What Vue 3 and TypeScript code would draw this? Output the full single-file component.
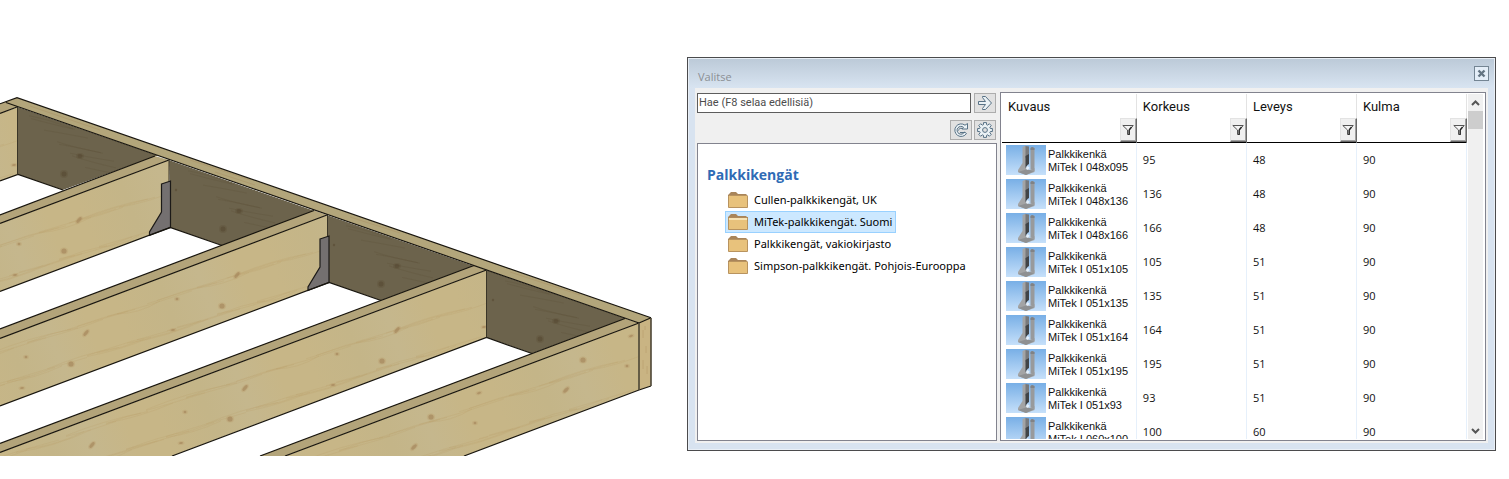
<script setup lang="ts">
import { ref } from 'vue'

interface Knot { x: number; y: number; rx: number; ry: number; a: number }
interface Beam { id: string; face: string; top: string; knots: Knot[]; x0: number; y0: number }

const cluster = (x: number, y: number): Knot[] => [
  { x, y, rx: 3.5, ry: 1.6, a: -50 },
  { x: x - 15, y: y + 31, rx: 2.6, ry: 2.6, a: 0 },
  { x: x - 60, y: y + 24, rx: 1.4, ry: 1.2, a: 0 },
  { x: x - 64, y: y + 55, rx: 2, ry: 1, a: -10 },
]

const flipped = (x: number, y: number): Knot[] => [
  { x, y, rx: 2.6, ry: 2.6, a: 0 },
  { x: x - 17, y: y + 30, rx: 3.5, ry: 1.6, a: -45 },
  { x: x + 48, y: y - 24, rx: 2, ry: 1, a: -15 },
  { x: x + 44, y: y + 6, rx: 1.4, ry: 1.2, a: 0 },
]

const beams: Beam[] = [
  { id: 'b0', face: '0,113.5 18,107 18,174.5 0,181', top: '0,103.8 17,97.7 17,107 0,113.5', x0: 18, y0: 107,
    knots: [{ x: 14, y: 165, rx: 2, ry: 1, a: -10 }] },
  { id: 'b1', face: '0,223.5 169,160 170,227.5 0,291.5', top: '0,215 155,156 169,160 0,223.5', x0: 169, y0: 160,
    knots: cluster(79, 220) },
  { id: 'b2', face: '0,338.5 327,215 329,282.5 0,406', top: '0,329 314,210.5 327,215 0,338.5', x0: 327, y0: 215,
    knots: [...cluster(237, 275), ...cluster(86, 333)] },
  { id: 'b3', face: '0,452.5 486.5,270 486.5,337.5 172,456 0,456', top: '0,443.5 474,265.5 486.5,270 0,452.5', x0: 486, y0: 270,
    knots: [...cluster(397, 330), ...cluster(245, 388), ...cluster(92, 445), { x: 484, y: 327, rx: 2, ry: 1, a: -10 }] },
  { id: 'b4', face: '285,456 639,323 639,390 464,456', top: '260,456 625,318.5 639,323 285,456', x0: 639, y0: 323,
    knots: [...flipped(583, 360), ...flipped(431, 417)] },
]

const shades = [
  { id: 's0', points: '18,107 158,155.5 63,190 18,174.5', x0: 18, y0: 107 },
  { id: 's1', points: '169,160 315,211 222,245.5 170,227.5', x0: 177, y0: 162 },
  { id: 's2', points: '327,215 474,266 381,300.5 329,282.5', x0: 335, y0: 217 },
  { id: 's3', points: '486.5,270 626,318.5 532,353.5 486.5,337.5', x0: 494, y0: 272 },
]

const hangers = [
  '161.5,184 170.5,181 170.5,227.5 149.5,235.5 149.5,232 161.5,212',
  '320,239 329,236 329,282.5 308,290.5 308,287 320,267',
]

const edges = [
  'M0 103.8 17 97.7 651 317.8', 'M6 102.5 639 323', 'M639 323 651 317.8', 'M0 181 18 174.5 63 190',
  'M0 291.5 170 227.5 222 245.5', 'M0 406 329 282.5 381 300.5', 'M172 456 486.5 337.5 532 353.5',
  'M0 113.5 17 107', 'M0 215 155 156', 'M0 223.5 169 160', 'M0 329 314 210.5', 'M0 338.5 327 215',
  'M0 443.5 474 265.5', 'M0 452.5 486.5 270', 'M260 456 625 318.5', 'M285 456 639 323',
  'M464 456 639 390 651 386',
]

// Wavy grain strokes running down-left along a joist face.
const grain = (x0: number, y0: number): string => {
  let d = ''
  for (let i = 0; i < 60; i++) {
    const sx = x0 - ((i * 73) % 600) + 20
    const off = (i * 29) % 66
    const sy = y0 + (x0 - sx) * 0.377 + off
    const len = 40 + ((i * 37) % 50)
    const bend = ((i * 17) % 12) - 4
    d += `M${sx} ${sy.toFixed(1)}q${-len / 2} ${(len * 0.14 + bend).toFixed(1)} ${-len} ${(len * 0.3).toFixed(1)}`
  }
  return d
}

// Faint strokes on the shaded rim faces.
const shadeGrain = (x0: number, y0: number): string => {
  let d = ''
  for (let i = 0; i < 14; i++) {
    const sx = x0 + ((i * 41) % 110)
    const sy = y0 + (sx - x0) * 0.35 + ((i * 23) % 62)
    d += `M${sx} ${sy.toFixed(1)}q18 ${2 + (i % 5)} 44 ${8 + (i % 6)}`
  }
  return d
}

const query = ref('')
const folders = ['Cullen-palkkikengät, UK', 'MiTek-palkkikengät. Suomi', 'Palkkikengät, vakiokirjasto', 'Simpson-palkkikengät. Pohjois-Eurooppa']
const selected = ref(1)

const columns = ['Kuvaus', 'Korkeus', 'Leveys', 'Kulma']
const rows = [
  { code: '048x095', height: 95, width: 48, angle: 90 },
  { code: '048x136', height: 136, width: 48, angle: 90 },
  { code: '048x166', height: 166, width: 48, angle: 90 },
  { code: '051x105', height: 105, width: 51, angle: 90 },
  { code: '051x135', height: 135, width: 51, angle: 90 },
  { code: '051x164', height: 164, width: 51, angle: 90 },
  { code: '051x195', height: 195, width: 51, angle: 90 },
  { code: '051x93', height: 93, width: 51, angle: 90 },
  { code: '060x100', height: 100, width: 60, angle: 90 },
]
</script>

<template>
  <main class="page">
    <svg class="model" viewBox="0 0 687 456" role="img" aria-label="Palkisto">
      <defs>
        <linearGradient id="wood" gradientUnits="userSpaceOnUse" x1="0" y1="0" x2="150" y2="-57" spreadMethod="repeat">
          <stop offset="0" stop-color="#c7b687" /><stop offset=".3" stop-color="#c4b588" />
          <stop offset=".55" stop-color="#c5b78d" /><stop offset=".8" stop-color="#c7b687" /><stop offset="1" stop-color="#c7b687" />
        </linearGradient>
        <clipPath v-for="b in beams" :id="b.id" :key="b.id"><polygon :points="b.face" /></clipPath>
        <clipPath v-for="s in shades" :id="s.id" :key="s.id"><polygon :points="s.points" /></clipPath>
      </defs>
      <polygon points="6,102.5 17,97.7 651,317.8 639,323" fill="#b3a67b" />
      <path d="M30 106l70 24M190 160l60 20M350 217l50 16M510 272l70 23M215 172l40 13" stroke="#a98f64" stroke-opacity=".5" />
      <g v-for="s in shades" :key="s.id" :clip-path="`url(#${s.id})`">
        <polygon :points="s.points" fill="#6c634c" />
        <path :d="shadeGrain(s.x0, s.y0)" class="grain dark" />
        <g fill="#54452f" fill-opacity=".2">
          <ellipse :cx="s.x0 + 62" :cy="s.y0 + 49" rx="4" ry="3" />
          <ellipse :cx="s.x0 + 46" :cy="s.y0 + 67" rx="4" ry="4" />
        </g>
        <g fill="#54452f" fill-opacity=".5">
          <ellipse :cx="s.x0 + 62" :cy="s.y0 + 49" rx="2.500" ry="2" />
          <ellipse :cx="s.x0 + 46" :cy="s.y0 + 67" rx="2.500" ry="2.500" />
          <ellipse :cx="s.x0 - 1" :cy="s.y0 + 28" rx="1.200" ry="1.200" />
        </g>
      </g>
      <g v-for="b in beams" :key="b.id">
        <polygon :points="b.top" fill="#b3a47a" />
        <g :clip-path="`url(#${b.id})`">
          <polygon :points="b.face" fill="url(#wood)" />
          <path :d="grain(b.x0, b.y0)" class="grain" />
          <g v-for="(k, i) in b.knots" :key="i" :transform="`translate(${k.x} ${k.y}) rotate(${k.a})`">
            <ellipse :rx="k.rx + 1.5" :ry="k.ry + 1" fill="#b99e6c" fill-opacity=".35" />
            <ellipse :rx="k.rx" :ry="k.ry" fill="#a18258" fill-opacity=".6" />
          </g>
        </g>
      </g>
      <polygon points="639,323 651,317.8 651,386 639,390" fill="#c9b483" />
      <path d="M643 330v8M646 346v7M643 360v9M647 366v8M645 326v4" stroke="#b99f6d" stroke-opacity=".6" />
      <polygon v-for="h in hangers" :key="h" :points="h" fill="#747070" stroke="#1c1a18" stroke-width="1.2" />
      <path v-for="e in edges" :key="e" :d="e" class="edge" />
      <path d="M17.500 107V174.500M169 160V181M327.500 215V236M486.500 270V337.500" class="corner" />
      <path d="M639 323V390M651 318V386" class="corner thick" />
    </svg>

    <section class="dialog" aria-label="Valitse">
      <header class="titlebar">
        <h1>Valitse</h1>
        <button class="close" type="button" aria-label="Sulje">
          <svg width="9" height="9" viewBox="0 0 9 9"><path d="M1.500 1.500 7.500 7.500M7.500 1.500 1.500 7.500" stroke="#647583" stroke-width="2.400" /></svg>
        </button>
      </header>
      <div class="content">
        <div class="left">
          <form class="search" @submit.prevent>
            <input v-model="query" type="text" placeholder="Hae (F8 selaa edellisiä)" aria-label="Hae">
            <button class="tool" type="submit" aria-label="Hae">
              <svg width="16" height="16" viewBox="0 0 16 16"><path d="M1.500 6.500h7L5.500 2.500V1.500h3L14.500 8l-6 6.500h-3v-1l3-4h-7z" /></svg>
            </button>
          </form>
          <div class="tools">
            <button class="tool" type="button" aria-label="Päivitä">
              <svg width="16" height="16" viewBox="0 0 16 16"><path d="M13.500 11.500A6.300 6.300 0 1 1 12 3.200L14.500 1.500V7H9l1.500-1.700A3.900 3.900 0 1 0 11.500 10zM5.500 8.500A2.500 2.500 0 0 1 9 6.500M7 10.500h5" /></svg>
            </button>
            <button class="tool" type="button" aria-label="Asetukset">
              <svg width="16" height="16" viewBox="0 0 16 16"><path d="M6.500 .6h3v2l1.300.6 1.500-1.500 2 2-1.500 1.500.6 1.300h2v3h-2l-.6 1.300 1.500 1.500-2 2-1.500-1.500-1.300.6v2h-3v-2l-1.300-.6-1.500 1.500-2-2 1.500-1.500-.6-1.300h-2v-3h2l.6-1.300-1.500-1.500 2-2 1.500 1.500 1.300-.6z" /><circle cx="8" cy="8" r="2.400" /></svg>
            </button>
          </div>
          <nav class="tree" aria-label="Palkkikengät">
            <h2>Palkkikengät</h2>
            <ul>
              <li v-for="(f, i) in folders" :key="f">
                <button type="button" class="folder" :class="{ on: i === selected }" @click="selected = i">
                  <svg width="20" height="16" viewBox="0 0 20 16">
                    <path d="M0 5V3L3 0H8L10 2H18L20 4V6H0Z" fill="#a9855a" />
                    <path d="M.5 4.500 1.500 3.500H18.500L19.500 4.500V15.500H.5Z" fill="#e8c27c" stroke="#b8935f" />
                    <path v-if="i === selected" d="M1 4H19V6H1Z" fill="#f7e3b5" />
                    <path v-if="i === selected" d="M0 3.500H20M0 6V7M20 6V7" stroke="#b08a5b" />
                  </svg>
                  <span>{{ f }}</span>
                </button>
              </li>
            </ul>
          </nav>
        </div>

        <div class="list">
          <div class="viewport">
            <table>
              <colgroup><col class="first"><col><col><col></colgroup>
              <thead>
                <tr>
                  <th v-for="c in columns" :key="c" scope="col">
                    <div class="head">
                      <span>{{ c }}</span>
                      <button type="button" class="filter" :aria-label="`Suodata ${c}`">
                        <svg width="12" height="12" viewBox="0 0 12 12"><path d="M.8 1.500H11.200L7.500 6V10.500H5.500V6Z" fill="#f4f4f4" stroke="#555" /><path d="M7 6V11M9.500 3 7 6" fill="none" stroke="#222" stroke-width="1.200" /></svg>
                      </button>
                    </div>
                  </th>
                </tr>
              </thead>
              <tbody>
                <tr v-for="r in rows" :key="r.code">
                  <td>
                    <div class="item">
                      <svg class="thumb" width="40" height="30" viewBox="0 0 40 30">
                        <defs><linearGradient id="sky" x1="0" y1="0" x2="0" y2="1"><stop offset="0" stop-color="#78afe6" /><stop offset="1" stop-color="#c6e0fa" /></linearGradient></defs>
                        <rect width="40" height="30" fill="url(#sky)" />
                        <path d="M16.500 2 20 .5V22L23 25 28.500 23V27L20 30 12 27V25L16.500 18Z" fill="#a3a4a5" />
                        <path d="M19.500 1 23 1.500V11L19.500 13Z" fill="#77797c" />
                        <path d="M19.500 11 23 9V19L21.500 20 19.500 23Z" fill="#404346" />
                        <path d="M24.500 3 26 2 28.500 3V26L24.500 24Z" fill="#989a9c" />
                        <path d="M24.500 3 26 2 28.500 3V5H24.500Z" fill="#808285" />
                        <path d="M12 27 20 24.500 28.500 26 20 30Z" fill="#8e9092" />
                        <path d="M21 21 23.500 22.500 22 25 20 24Z" fill="#e4f0fc" />
                      </svg>
                      <span>Palkkikenkä<br>MiTek I {{ r.code }}</span>
                    </div>
                  </td>
                  <td>{{ r.height }}</td>
                  <td>{{ r.width }}</td>
                  <td>{{ r.angle }}</td>
                </tr>
              </tbody>
            </table>
          </div>
          <div class="scrollbar">
            <button type="button" aria-label="Ylös"><svg width="9" height="6" viewBox="0 0 9 6"><path d="M1 5 4.500 1.500 8 5" /></svg></button>
            <div class="track"><div class="grip"></div></div>
            <button type="button" aria-label="Alas"><svg width="9" height="6" viewBox="0 0 9 6"><path d="M1 1 4.500 4.500 8 1" /></svg></button>
          </div>
        </div>
      </div>
    </section>
  </main>
</template>

<style>
body { background: #fff; }
</style>

<style scoped>
* { box-sizing: border-box; }
.page {
  display: grid;
  grid-template-columns: 687fr 809fr;
  align-items: start;
  padding-right: 13px;
  font: 11px/16px "Open Sans", "Noto Sans", sans-serif;
  color: #111;
}
button { margin: 0; padding: 0; font: inherit; color: inherit; border: 0; background: none; }
svg { display: block; flex: none; }
.model { width: 100%; height: auto; }
.edge { fill: none; stroke: #17140d; stroke-width: 1.2; }
.corner { fill: none; stroke: #3a3527; stroke-width: 1; }
.thick { stroke: #4d4636; stroke-width: 1.6; }
.grain { fill: none; stroke: #b99c66; stroke-opacity: .25; stroke-width: .8; }
.dark { stroke: #5c4f38; stroke-opacity: .3; }

.dialog {
  margin-top: 57px;
  border: 1px solid #4b4b4d;
  padding: 1px 7px 7px;
  background: #d8e3f0;
  box-shadow: inset 0 0 0 1px #e9eff6;
}
.titlebar {
  display: flex;
  justify-content: space-between;
  align-items: center;
  height: 29px;
  margin: 0 -6px;
  padding: 0 5px 0 9px;
  background: linear-gradient(#bccad8, #d8e4f1);
}
.titlebar h1 { margin: 0; padding-top: 6px; font: 400 11px/16px "Open Sans", "Noto Sans", sans-serif; color: #8b8f94; }
.close {
  display: grid;
  place-items: center;
  width: 15px;
  height: 15px;
  border: 1px solid #748593;
  background: #e4eef8;
}
.content {
  display: grid;
  grid-template-columns: 300fr 486fr;
  gap: 3px;
  padding: 4px 2px 2px;
  background: #f0f0f0;
}
.left { display: flex; flex-direction: column; padding-top: 1px; }
.search { display: flex; gap: 3px; padding-right: 1px; }
.search input {
  flex: 1;
  min-width: 0;
  height: 20px;
  padding: 0 1px 1px;
  border: 1px solid #5d5d5d;
  border-radius: 0;
  background: #fff;
  font: 11px/16px Roboto, "Open Sans", sans-serif;
  color: #444;
}
.search input::placeholder { color: #4c4c4c; opacity: 1; }
.tool {
  display: grid;
  place-items: center;
  width: 22px;
  height: 20px;
  border: 1px solid #adadad;
  background: #e1e1e1;
}
.tool path, .tool circle { fill: #eaf1f5; stroke: #587286; stroke-width: 1; }
.tool circle { fill: #e1e1e1; }
.tools { display: flex; justify-content: flex-end; gap: 2px; padding: 7px 1px 3px 0; }
.tree { flex: 1; padding: 22px 9px 0; border: 1px solid #82838e; background: #fff; }
.tree h2 { margin: 0 0 5px; font-size: 14px; line-height: 18px; font-weight: 700; color: #2f6bb5; }
.tree ul { margin: 0; padding: 0 0 0 18px; list-style: none; }
.folder {
  display: flex;
  align-items: center;
  gap: 6px;
  height: 22px;
  padding: 0 3px 0 2px;
  border: 1px solid transparent;
  font: 11px/16px "Noto Sans", "Open Sans", sans-serif;
  color: #000;
  white-space: nowrap;
}
.folder.on { border-color: #99d1ff; background: #cce8ff; }

.list { display: flex; gap: 1px; height: 349px; padding: 1px 2px 1px 1px; border: 1px solid #82838e; background: #fff; }
.viewport { flex: 1; min-width: 0; overflow: hidden; }
table { width: 100%; border-collapse: separate; border-spacing: 0; table-layout: fixed; }
.first { width: 29%; }
th { height: 49px; padding: 0; border-bottom: 1px solid #000; border-right: 1px solid #e3e3e3; text-align: left; font-weight: 400; }
.head { display: flex; flex-direction: column; justify-content: space-between; height: 48px; padding-left: 6px; font: 13px/18px Roboto, "Open Sans", sans-serif; }
.head span { padding-top: 4px; }
.filter {
  display: grid;
  place-items: center;
  align-self: flex-end;
  width: 17px;
  height: 24px;
  margin-right: -1px;
  border: 1px solid;
  border-color: #e3e3e3 #696969 #696969 #e3e3e3;
  background: #f0f0f0;
  box-shadow: inset -1px -1px #a0a0a0;
}
td { height: 34px; padding: 0 0 0 6px; border-right: 1px solid #e6f0fb; }
td:first-child { padding-left: 4px; }
.item { display: flex; align-items: center; gap: 2px; font: 11px/13px "Liberation Sans", Arial, sans-serif; white-space: nowrap; }
.item span { padding-top: 2px; }
.scrollbar { display: flex; flex-direction: column; width: 15px; background: #f0f0f0; }
.scrollbar button { display: grid; place-items: center; height: 17px; }
.scrollbar path { fill: none; stroke: #555; stroke-width: 2; }
.track { flex: 1; }
.grip { height: 18px; background: #cdcdcd; }
</style>
